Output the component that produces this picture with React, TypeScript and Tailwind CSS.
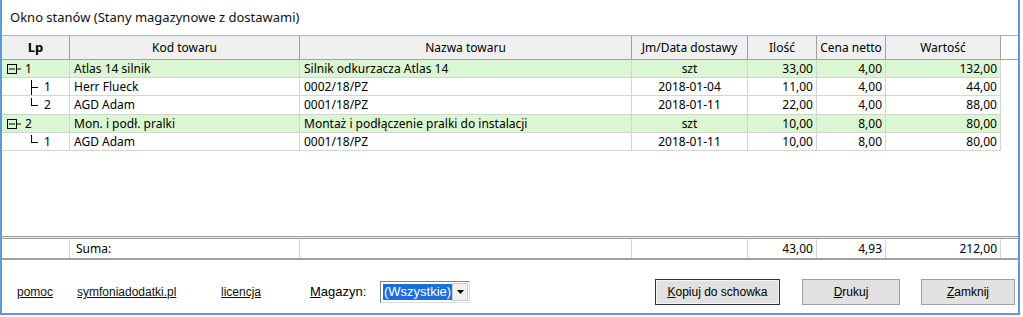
import React from "react";

type Row = {
  kind: "group" | "child" | "last";
  lp: string;
  kod: string;
  nazwa: string;
  jm: string;
  ilosc: string;
  cena: string;
  wartosc: string;
  h: string;
};

const rows: Row[] = [
  { kind: "group", lp: "1", kod: "Atlas 14 silnik", nazwa: "Silnik odkurzacza Atlas 14", jm: "szt", ilosc: "33,00", cena: "4,00", wartosc: "132,00", h: "h-[18px]" },
  { kind: "child", lp: "1", kod: "Herr Flueck", nazwa: "0002/18/PZ", jm: "2018-01-04", ilosc: "11,00", cena: "4,00", wartosc: "44,00", h: "h-[18px]" },
  { kind: "last", lp: "2", kod: "AGD Adam", nazwa: "0001/18/PZ", jm: "2018-01-11", ilosc: "22,00", cena: "4,00", wartosc: "88,00", h: "h-[19px]" },
  { kind: "group", lp: "2", kod: "Mon. i podł. pralki", nazwa: "Montaż i podłączenie pralki do instalacji", jm: "szt", ilosc: "10,00", cena: "8,00", wartosc: "80,00", h: "h-[18px]" },
  { kind: "last", lp: "1", kod: "AGD Adam", nazwa: "0001/18/PZ", jm: "2018-01-11", ilosc: "10,00", cena: "8,00", wartosc: "80,00", h: "h-[18px]" },
];

function Tree({ kind }: { kind: Row["kind"] }) {
  if (kind === "group") {
    return (
      <svg width="20" height="18" className="shrink-0">
        <rect x="5.5" y="4.5" width="9" height="9" fill="none" stroke="#000" strokeWidth="1" />
        <line x1="7" y1="9" x2="13" y2="9" stroke="#000" strokeWidth="1" />
        <line x1="15" y1="9" x2="19" y2="9" stroke="#000" strokeWidth="1" />
      </svg>
    );
  }
  return (
    <svg width="38" height="18" className="shrink-0">
      <line x1="29.5" y1="2" x2="29.5" y2={kind === "last" ? 10 : 18} stroke="#000" strokeWidth="1" />
      <line x1="29.5" y1="9.5" x2="36" y2="9.5" stroke="#000" strokeWidth="1" />
    </svg>
  );
}

export default function App() {
  const cellBase = "h-full border-r border-[#d4d4d4] flex items-center whitespace-nowrap overflow-hidden";
  const head = "h-full border-r border-[#a0a0a0] bg-[#f0f0f0] flex items-center justify-center whitespace-nowrap";
  return (
    <div className="w-[1023px] h-[317px] bg-white overflow-hidden text-black font-['Noto_Sans',sans-serif]">
      <div className="w-[1020px] h-[315px] border-l-2 border-r-2 border-b-2 border-[#5b9bd5] flex flex-col">
        <div className="h-[35px] pl-[8px] pt-[1px] flex items-center text-[13px] text-[#111]">
          Okno stanów (Stany magazynowe z dostawami)
        </div>
        <div className="h-[225px] border-t border-[#a9b6c4] flex flex-col text-[12px]">
          <div className="h-[24px] flex border-b border-[#a0a0a0] shrink-0">
            <div className={`${head} w-[68px] font-bold text-[13px]`}>Lp</div>
            <div className={`${head} w-[230px]`}>Kod towaru</div>
            <div className={`${head} w-[332px]`}>Nazwa towaru</div>
            <div className={`${head} w-[116px]`}>Jm/Data dostawy</div>
            <div className={`${head} w-[69px]`}>Ilość</div>
            <div className={`${head} w-[69px]`}>Cena netto</div>
            <div className={`${head} w-[115px]`}>Wartość</div>
          </div>
          {rows.map((r, i) => (
            <div key={i} className={`${r.h} flex shrink-0 w-[999px] border-b border-[#d4d4d4] ${r.kind === "group" ? "bg-[#dbf6d2]" : "bg-white"}`}>
              <div className={`${cellBase} w-[68px]`}>
                <Tree kind={r.kind} />
                <span className={r.kind === "group" ? "ml-[3px]" : "ml-[4px]"}>{r.lp}</span>
              </div>
              <div className={`${cellBase} w-[230px] pl-[4px]`}>{r.kod}</div>
              <div className={`${cellBase} w-[332px] pl-[4px]`}>{r.nazwa}</div>
              <div className={`${cellBase} w-[116px] justify-center`}>{r.jm}</div>
              <div className={`${cellBase} w-[69px] justify-end pr-[3px]`}>{r.ilosc}</div>
              <div className={`${cellBase} w-[69px] justify-end pr-[3px]`}>{r.cena}</div>
              <div className={`${cellBase} w-[115px] justify-end pr-[3px]`}>{r.wartosc}</div>
            </div>
          ))}
          <div className="flex-1" />
          <div className="h-[3px] border-t border-b border-[#a0a0a0] bg-[#e8e8e8] shrink-0" />
          <div className="h-[19px] flex shrink-0">
            <div className={`${cellBase} w-[68px]`} />
            <div className={`${cellBase} w-[230px] pl-[6px]`}>Suma:</div>
            <div className={`${cellBase} w-[332px]`} />
            <div className={`${cellBase} w-[116px]`} />
            <div className={`${cellBase} w-[69px] justify-end pr-[3px]`}>43,00</div>
            <div className={`${cellBase} w-[69px] justify-end pr-[3px]`}>4,93</div>
            <div className={`${cellBase} w-[115px] justify-end pr-[3px]`}>212,00</div>
          </div>
          <div className="h-[2px] border-t border-b border-[#a0a0a0] shrink-0" />
        </div>
        <div className="flex-1 flex items-center pt-[11px] pl-[15px] text-[12px] font-['Liberation_Sans',Arial,sans-serif]">
          <div className="w-[60px]"><span className="underline text-[#111]">pomoc</span></div>
          <div className="w-[144px]"><span className="underline text-[#111]">symfoniadodatki.pl</span></div>
          <div className="w-[89px]"><span className="underline text-[#111]">licencja</span></div>
          <div className="w-[70px] text-[13px]"><span className="underline">M</span>agazyn:</div>
          <div className="w-[90px] h-[22px] border border-t-[#808080] border-l-[#808080] border-r-[#dcdcdc] border-b-[#dcdcdc] bg-white flex items-center pl-[2px] pr-[1px]">
            <div className="flex-1 h-[16px] bg-[#1a6fdc] text-white text-[13px] leading-[16px] pl-[1px] whitespace-nowrap">(Wszystkie)</div>
            <div className="w-[16px] h-[18px] bg-[#f0f0f0] border border-[#c8c8c8] flex items-center justify-center">
              <svg width="7" height="4"><polygon points="0,0 7,0 3.5,4" fill="#000" /></svg>
            </div>
          </div>
          <div className="ml-[185px] w-[125px] h-[26px] bg-[#e1e1e1] border border-[#333] shadow-[inset_0_0_0_1px_#f4f4f4] flex items-center justify-center">
            <span><span className="underline">K</span>opiuj do schowka</span>
          </div>
          <div className="ml-[22px] w-[98px] h-[26px] bg-[#e1e1e1] border border-[#a0a0a0] flex items-center justify-center">
            <span><span className="underline">D</span>rukuj</span>
          </div>
          <div className="ml-[21px] w-[94px] h-[26px] bg-[#e1e1e1] border border-[#a0a0a0] flex items-center justify-center">
            <span><span className="underline">Z</span>amknij</span>
          </div>
        </div>
      </div>
    </div>
  );
}
